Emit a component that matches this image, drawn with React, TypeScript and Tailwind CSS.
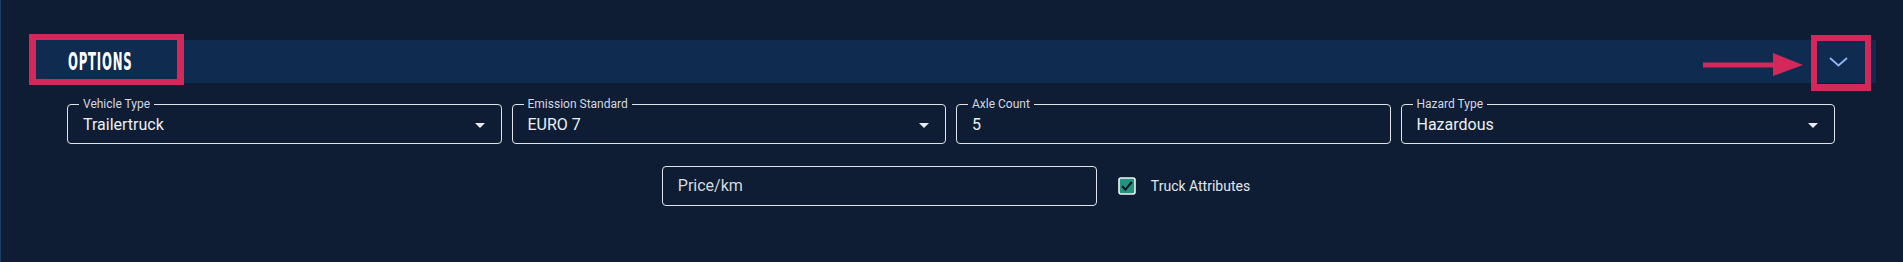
import React from "react";

const SelectField = ({ label, value, select = true }: { label: string; value: string; select?: boolean }) => (
  <div className="relative h-[40px] rounded-[4px] border border-[#dfe3ea] flex items-center pl-[15px] pr-[15px] pt-[2px]">
    <span className="absolute left-[11px] top-[-8px] px-[4px] bg-[#0e1d34] text-[12px] leading-[14px] text-[#d3d8e0]">
      {label}
    </span>
    <span className="flex-1 text-[16px] leading-[20px] text-[#eceff3]">{value}</span>
    {select && (
      <svg width="10" height="5" viewBox="0 0 10 5" className="mr-[1px]">
        <polygon points="0,0 10,0 5,5" fill="#e8ebf0" />
      </svg>
    )}
  </div>
);

export default function App() {
  return (
    <div
      className="relative h-[262px] w-full overflow-hidden bg-[#0e1d34] border-l border-[#1d3d6d] pt-[40px]"
      style={{ fontFamily: "Roboto, 'Liberation Sans', sans-serif" }}
    >
      {/* Header bar */}
      <div className="ml-[35px] mr-[27px] h-[43px] bg-[#0f2b4f] flex items-center justify-between">
        <div className="pl-[32px] h-full flex items-center">
          <span
            className="inline-block origin-left scale-x-[0.52] text-[25px] leading-none font-bold text-white tracking-[1.5px]"
            style={{ fontFamily: "'DejaVu Sans Condensed', 'DejaVu Sans', sans-serif" }}
          >
            OPTIONS
          </span>
        </div>
        <div className="w-[40px] h-full mr-[18px] flex items-center justify-center">
          <svg width="19" height="10" viewBox="0 0 19 10">
            <polyline points="1,1 9.5,8.5 18,1" fill="none" stroke="#8fb5f3" strokeWidth="1.8" />
          </svg>
        </div>
      </div>

      {/* Fields row */}
      <div className="mt-[21px] pl-[66px] pr-[68px] grid grid-cols-4 gap-[10px]">
        <SelectField label="Vehicle Type" value="Trailertruck" />
        <SelectField label="Emission Standard" value="EURO 7" />
        <SelectField label="Axle Count" value="5" select={false} />
        <SelectField label="Hazard Type" value="Hazardous" />
      </div>

      {/* Second row */}
      <div className="mt-[22px] flex justify-center items-center pl-[8px]">
        <div className="w-[435px] h-[40px] rounded-[4px] border border-[#dfe3ea] flex items-center pl-[15px] text-[16px] text-[#d6d9de]">
          Price/km
        </div>
        <div className="ml-[21px] flex items-center">
          <svg width="18" height="18" viewBox="0 0 18 18">
            <rect x="1" y="1" width="16" height="16" rx="2" fill="#23937f" stroke="#f2f4f7" strokeWidth="1.6" />
            <polyline points="4.2,9.2 7.4,12.6 13.8,5" fill="none" stroke="#08131f" strokeWidth="2" />
          </svg>
          <span className="ml-[15px] text-[14px] text-[#e3e6ea]">Truck Attributes</span>
        </div>
      </div>

      {/* Annotation overlays */}
      <div className="absolute left-[28px] top-[34px] w-[155px] h-[51px] border-x-[7px] border-y-[6px] border-[#d4285b]" />
      <div className="absolute left-[1810px] top-[35px] w-[60px] h-[56px] border-[6px] border-b-[7px] border-[#d4285b]" />
      <svg className="absolute left-[1700px] top-[50px]" width="105" height="30" viewBox="0 0 105 30">
        <rect x="2" y="12.5" width="72" height="5" fill="#d4285b" />
        <polygon points="72,3 102,15 72,26" fill="#d4285b" />
      </svg>
    </div>
  );
}
